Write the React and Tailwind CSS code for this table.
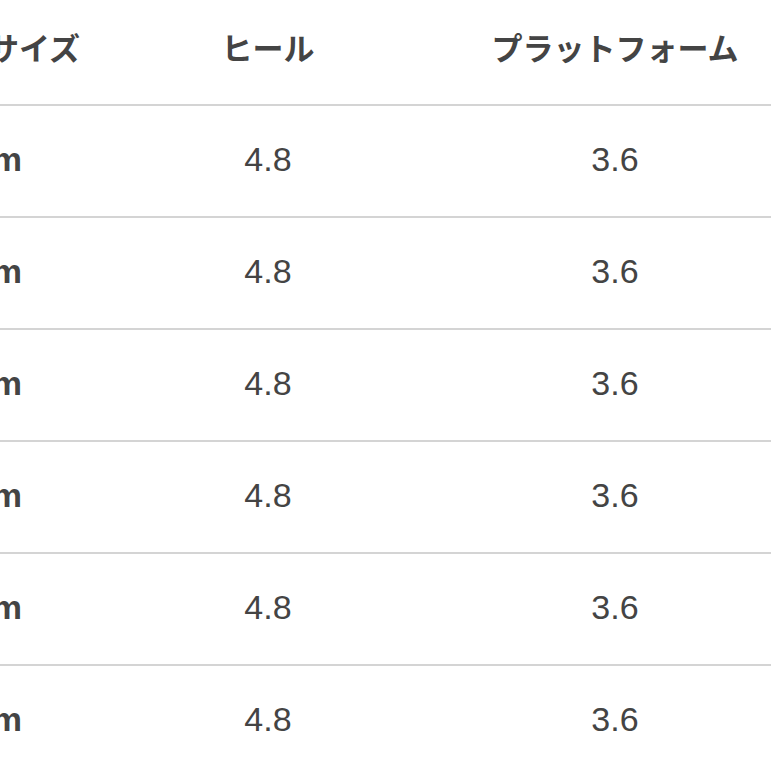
export default function App() {
  const rows = Array.from({ length: 6 });
  return (
    <div className="w-[771px] h-[771px] overflow-hidden bg-white text-[#444]" style={{ fontFamily: '"Liberation Sans", "Noto Sans CJK JP", sans-serif' }}>
      <div className="w-[804px]">
        <div className="flex h-[106px] items-center pb-[10px] font-bold text-[31px] border-b-2 border-[#d4d4d4]" style={{ fontFamily: '"Noto Sans CJK JP", sans-serif' }}>
          <div className="w-[110px] flex justify-end whitespace-nowrap pr-[30px]">サイズ</div>
          <div className="w-[316px] flex justify-center whitespace-nowrap">ヒール</div>
          <div className="w-[378px] flex justify-center whitespace-nowrap">プラットフォーム</div>
        </div>
        {rows.map((_, i) => (
          <div key={i} className="flex h-[112px] items-center pb-[3px] text-[34px] border-b-2 border-[#d4d4d4]">
            <div className="w-[110px] flex justify-end whitespace-nowrap pr-[88px] font-bold">22.5cm</div>
            <div className="w-[316px] flex justify-center whitespace-nowrap">4.8</div>
            <div className="w-[378px] flex justify-center whitespace-nowrap">3.6</div>
          </div>
        ))}
      </div>
    </div>
  );
}
